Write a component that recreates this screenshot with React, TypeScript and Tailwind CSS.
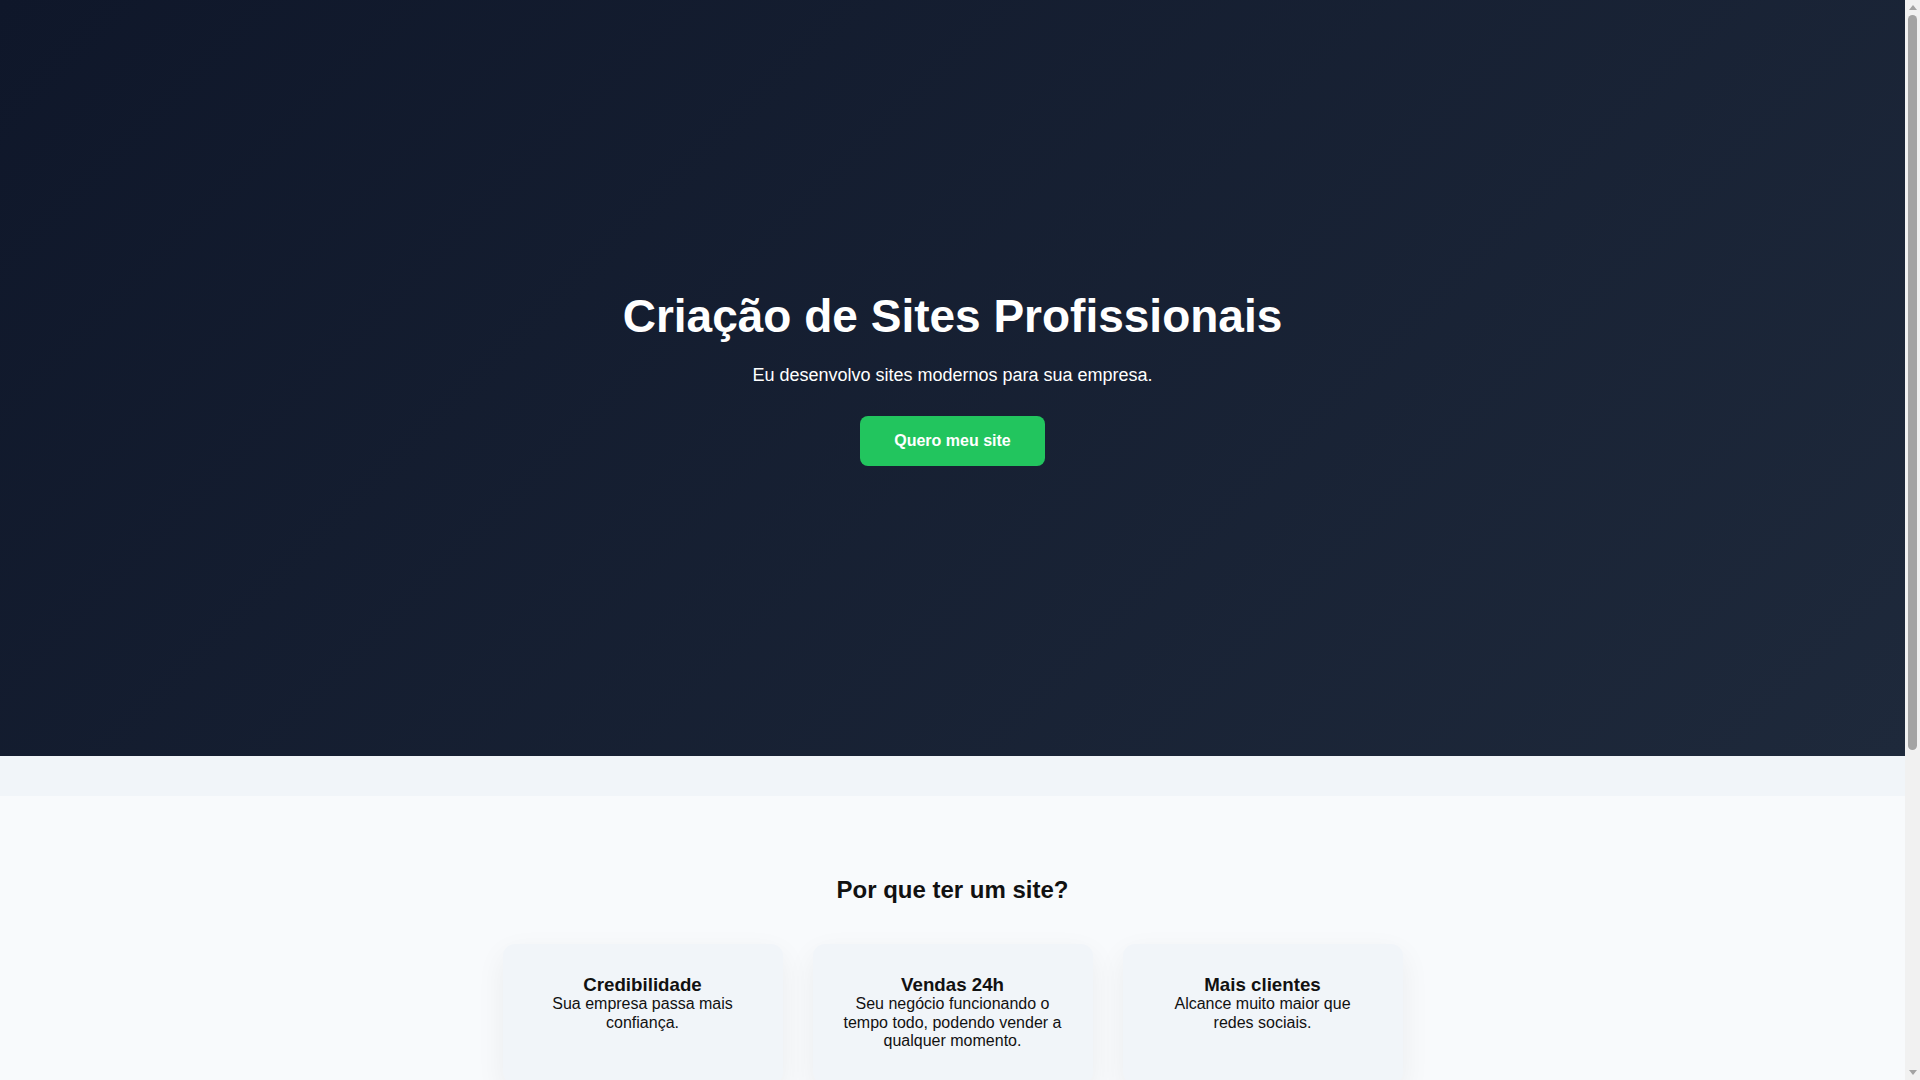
const features = [
  {
    title: "Credibilidade",
    text: "Sua empresa passa mais confiança.",
  },
  {
    title: "Vendas 24h",
    text: "Seu negócio funcionando o tempo todo, podendo vender a qualquer momento.",
  },
  {
    title: "Mais clientes",
    text: "Alcance muito maior que redes sociais.",
  },
];

const FeatureCard = ({ title, text }: { title: string; text: string }) => (
  <div className="min-h-[140px] rounded-xl bg-[#f1f5f9] p-[30px] shadow-[0_10px_30px_rgba(15,23,42,0.06)]">
    <h3 className="text-[18.72px] font-bold leading-[1.15]">{title}</h3>
    <p className="text-base leading-[1.15]">{text}</p>
  </div>
);

// the page scrolls in the reference, so the classic scrollbar is drawn on top
const Scrollbar = () => (
  <div className="fixed top-0 right-0 flex h-screen w-[15px] flex-col items-center bg-[#f1f1f1]">
    <div className="flex h-[15px] w-full items-center justify-center">
      <div className="h-0 w-0 border-x-[4px] border-b-[5px] border-x-transparent border-b-[#a3a3a3]" />
    </div>
    <div className="h-[735px] w-[9px] rounded-full bg-[#a3a3a3]" />
    <div className="flex-1" />
    <div className="flex h-[15px] w-full items-center justify-center">
      <div className="h-0 w-0 border-x-[4px] border-t-[5px] border-x-transparent border-t-[#a3a3a3]" />
    </div>
  </div>
);

export default function App() {
  return (
    <div className="min-h-screen bg-[#f1f5f9] font-['Liberation_Sans',Arial,sans-serif] text-[#111]">
      <div className="mr-[15px]">
        <section className="flex h-[70vh] flex-col items-center justify-center bg-[linear-gradient(135deg,#0f172a,#1e293b)] px-5 text-center text-white">
          <h1 className="mb-[22px] text-[46px] font-bold leading-[1.15]">
            Criação de Sites Profissionais
          </h1>
          <p className="mb-[30px] text-lg leading-[1.15]">
            Eu desenvolvo sites modernos para sua empresa.
          </p>
          <a
            href="#"
            className="rounded-lg bg-[#22c55e] px-[34px] py-4 text-base font-bold leading-[1.15] text-white"
          >
            Quero meu site
          </a>
        </section>

        <div className="h-10" />

        <section className="bg-[#f8fafc] px-5 pt-[60px] pb-[450px] text-center">
          <h2 className="mt-5 mb-10 text-2xl font-bold leading-[1.15]">
            Por que ter um site?
          </h2>
          <div className="mx-auto grid max-w-[900px] grid-cols-3 gap-[30px]">
            {features.map((f) => (
              <FeatureCard key={f.title} title={f.title} text={f.text} />
            ))}
          </div>
        </section>
      </div>
      <Scrollbar />
    </div>
  );
}
